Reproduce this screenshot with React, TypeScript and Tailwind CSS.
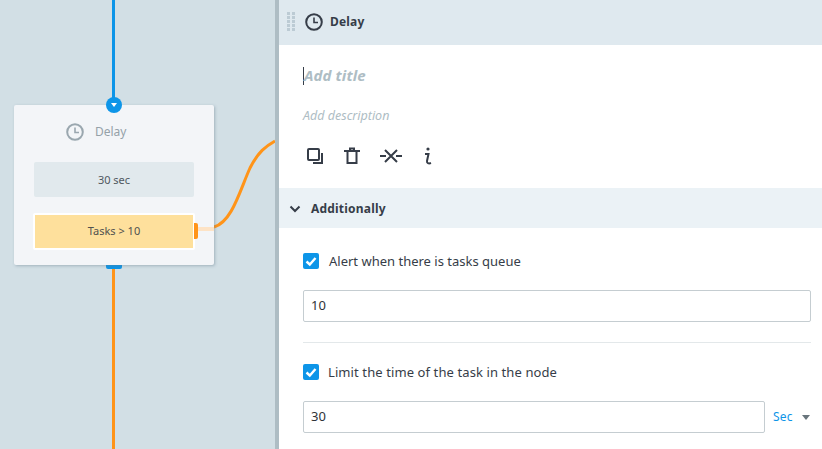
const font = "font-['Noto_Sans',sans-serif]";

function ClockIcon({ className }: { className: string }) {
  return (
    <svg viewBox="0 0 18 18" className={className} fill="none" stroke="currentColor" strokeWidth="2">
      <circle cx="9" cy="9" r="7.8" />
      <path d="M9 4.5V9.5H13" strokeWidth="1.6" />
    </svg>
  );
}

function Check() {
  return (
    <div className="flex h-4 w-4 shrink-0 items-center justify-center rounded-[2px] bg-[#0d95e8]">
      <svg viewBox="0 0 16 16" className="h-4 w-4" fill="none" stroke="white" strokeWidth="2.4">
        <path d="M3.5 8.5L6.8 11.5L12.5 5" />
      </svg>
    </div>
  );
}

function Canvas() {
  return (
    <div className="relative h-full w-[275px] shrink-0 overflow-hidden bg-[#d2dfe5]">
      <svg className="absolute left-0 top-0" width="275" height="449" fill="none">
        <path d="M113.5 0V100" stroke="#0d95e8" strokeWidth="3" />
        <path d="M113.5 268V449" stroke="#ff9419" strokeWidth="3" />
        <path d="M214 227C232 222 240 190 250 168C258 152 266 146 275 141" stroke="#ff9419" strokeWidth="3" />
      </svg>

      <div className="absolute left-[106px] top-[262px] h-[7px] w-4 rounded-b-[2px] bg-[#0d95e8]" />

      <div className="absolute left-[14px] top-[105px] h-[160px] w-[200px] rounded-[2px] bg-[#f3f5f8] shadow-[1px_1px_3px_rgba(100,125,140,0.45)]">
        <div className="flex h-[57px] items-center pl-[52px] pb-[3px]">
          <ClockIcon className="h-[18px] w-[18px] text-[#9aa7af]" />
          <span className="ml-[11px] text-xs text-[#95a1a9]">Delay</span>
        </div>
        <div className="mx-5 flex h-[35px] items-center justify-center rounded-[2px] bg-[#e1e9ed] pt-px text-[11px] text-[#50585f]">
          30 sec
        </div>
        <div className="relative mx-[19px] mt-[16px] flex h-[37px] items-center justify-center rounded-[2px] border-2 border-white bg-[#fee09c] text-[11px] text-[#50514f]">
          Tasks &gt; 10
          <div className="absolute left-[159px] top-[8px] h-4 w-1 rounded-r-[2px] bg-[#ff9419]" />
          <div className="absolute left-[163px] top-[12px] h-1 w-4 bg-[#fde3c6]" />
        </div>
      </div>

      <div className="absolute left-[106px] top-[97px] flex h-4 w-4 items-center justify-center rounded-full bg-[#0d95e8]">
        <div className="h-0 w-0 border-x-[3.5px] border-t-[4px] border-x-transparent border-t-white" />
      </div>
    </div>
  );
}

function Panel() {
  return (
    <div className="min-w-0 flex-1 overflow-hidden border-l-4 border-[#aebdc4] bg-white">
      <div className="flex h-[45px] items-center bg-[#dfe9ef] pb-[2px] pl-2">
        <div className="grid grid-cols-2 gap-x-[2px] gap-y-[1px]">
          {[0, 1, 2, 3, 4, 5, 6, 7, 8, 9].map((i) => (
            <div key={i} className="h-[3px] w-[3px] bg-[#bccbd4]" />
          ))}
        </div>
        <ClockIcon className="ml-[10px] h-[18px] w-[18px] text-[#363d48]" />
        <span className="ml-[7px] text-xs font-bold tracking-[0.2px] text-[#363d48]">Delay</span>
      </div>

      <div className="h-[143px] px-6">
        <div className="flex h-[62px] items-center pb-[1px]">
          <div className="h-[18px] w-px bg-[#363d48]" />
          <span className="text-[15px] font-bold italic tracking-[0.1px] text-[#aebdc4]">Add title</span>
        </div>
        <div className="text-[12.5px] italic text-[#aebdc4]">Add description</div>
        <div className="mt-[20px] flex items-center text-[#363d48]">
          <svg viewBox="0 0 20 20" className="ml-[2px] h-5 w-5" fill="none" stroke="currentColor" strokeWidth="2">
            <rect x="3" y="3" width="11" height="11" rx="1" />
            <path d="M17 7V17H8" />
          </svg>
          <svg viewBox="0 0 20 20" className="ml-[17px] h-5 w-5" fill="none" stroke="currentColor" strokeWidth="2">
            <path d="M2 5H18M8 5V2.5H12V5M5.5 5V17H14.5V5" />
          </svg>
          <svg viewBox="0 0 24 20" className="ml-[17px] h-5 w-6" fill="none" stroke="currentColor" strokeWidth="2">
            <path d="M1 10H7M17 10H23M6 4L18 16M18 4L6 16" />
          </svg>
          <svg viewBox="0 0 20 20" className="ml-[15px] h-5 w-5" fill="none" stroke="currentColor" strokeWidth="2">
            <circle cx="10" cy="3" r="1.6" fill="currentColor" stroke="none" />
            <path d="M7 8H10.5L9 15C8.7 17 10.5 18 13 17" />
          </svg>
        </div>
      </div>

      <div className="flex h-[40px] items-center bg-[#ebf2f6] pl-[10px] pt-px text-[#363d48]">
        <svg viewBox="0 0 12 8" className="h-2 w-3" fill="none" stroke="currentColor" strokeWidth="2">
          <path d="M1.5 1.5L6 6L10.5 1.5" />
        </svg>
        <span className="ml-[10px] text-xs font-bold tracking-[0.2px]">Additionally</span>
      </div>

      <div className="pl-6 pr-[11px]">
        <div className="flex h-[62px] items-center gap-[10px] pt-[4px]">
          <Check />
          <span className="pt-[2px] text-[13px] text-[#363d48]">Alert when there is tasks queue</span>
        </div>
        <div className="flex h-8 items-center rounded-[2px] border border-[#c5cdd1] pl-[7px] text-[13px] text-[#2f3338]">
          10
        </div>
        <div className="mt-[20px] h-px bg-[#e3e8ea]" />
        <div className="flex h-[58px] items-center gap-[9px]">
          <Check />
          <span className="pt-[2px] text-[13px] tracking-[0.1px] text-[#363d48]">Limit the time of the task in the node</span>
        </div>
        <div className="flex items-center">
          <div className="flex h-8 w-[462px] items-center rounded-[2px] border border-[#c5cdd1] pl-[7px] text-[13px] text-[#2f3338]">
            30
          </div>
          <span className="ml-2 text-xs tracking-[0.2px] text-[#0d95e8]">Sec</span>
          <div className="ml-[9px] h-0 w-0 border-x-[4px] border-t-[5px] border-x-transparent border-t-[#69757c]" />
        </div>
      </div>
    </div>
  );
}

export default function App() {
  return (
    <div className={`flex h-[449px] w-[822px] overflow-hidden ${font}`}>
      <Canvas />
      <Panel />
    </div>
  );
}
